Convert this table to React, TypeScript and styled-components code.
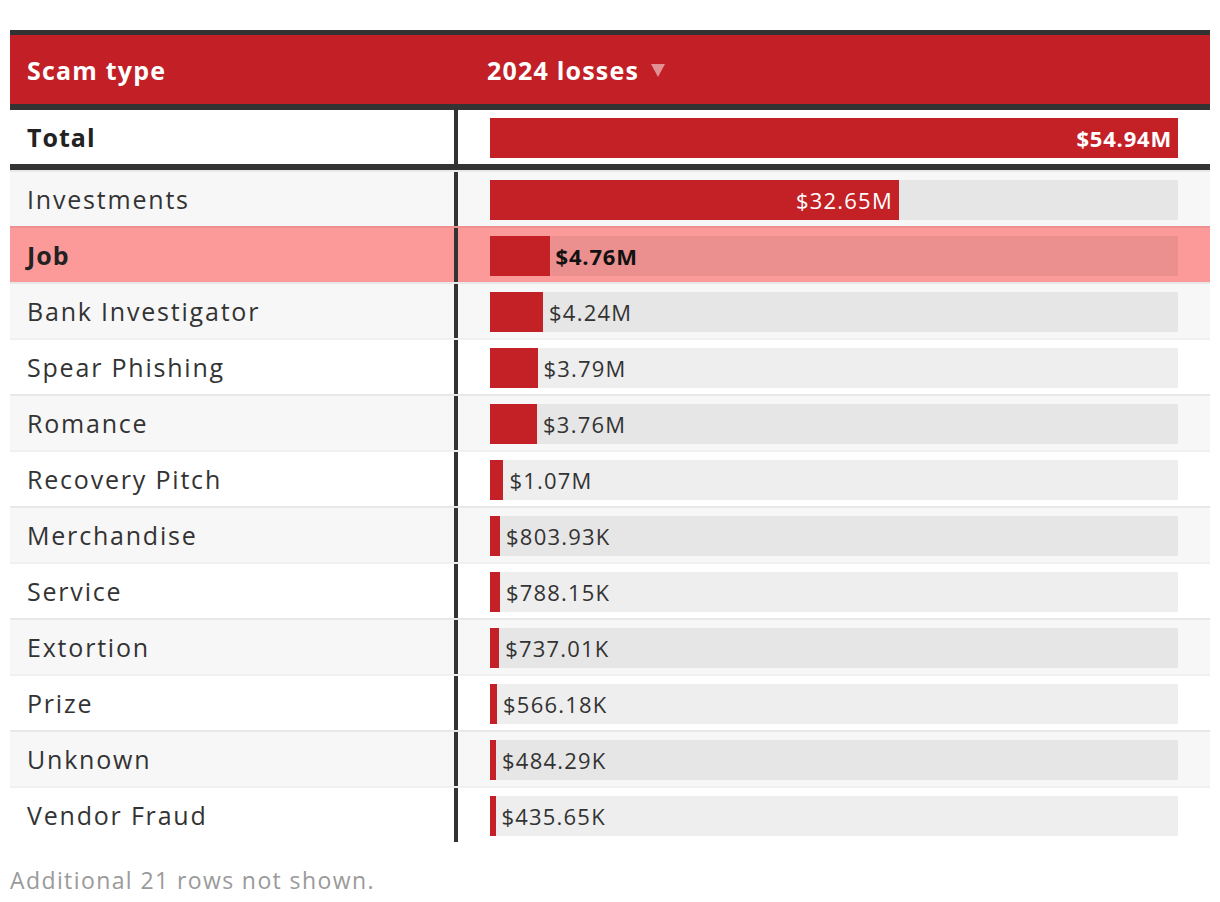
import React from "react";
import styled, { createGlobalStyle } from "styled-components";

type Row = { name: string; value: number; label: string; highlight?: boolean };

const MAX = 54.94;

const rows: Row[] = [
  { name: "Investments", value: 32.65, label: "$32.65M" },
  { name: "Job", value: 4.76, label: "$4.76M", highlight: true },
  { name: "Bank Investigator", value: 4.24, label: "$4.24M" },
  { name: "Spear Phishing", value: 3.79, label: "$3.79M" },
  { name: "Romance", value: 3.76, label: "$3.76M" },
  { name: "Recovery Pitch", value: 1.07, label: "$1.07M" },
  { name: "Merchandise", value: 0.80393, label: "$803.93K" },
  { name: "Service", value: 0.78815, label: "$788.15K" },
  { name: "Extortion", value: 0.73701, label: "$737.01K" },
  { name: "Prize", value: 0.56618, label: "$566.18K" },
  { name: "Unknown", value: 0.48429, label: "$484.29K" },
  { name: "Vendor Fraud", value: 0.43565, label: "$435.65K" },
];

const GlobalStyle = createGlobalStyle`
  body {
    margin: 0;
    background: #fff;
    font-family: "Open Sans", "Noto Sans", sans-serif;
    color: #333;
  }
`;

const Page = styled.div`
  padding: 30px 10px 0;
`;

const Table = styled.div`
  width: 1200px;
`;

const Header = styled.div`
  display: grid;
  grid-template-columns: 448px 1fr;
  height: 69px;
  align-items: center;
  background: #c22026;
  border-top: 5px solid #333;
  border-bottom: 6px solid #333;
  color: #fff;
  font-weight: 700;
  font-size: 25px;
  letter-spacing: 1.2px;
`;

const HeadCell = styled.div<{ $pad: number }>`
  display: flex;
  align-items: center;
  gap: 12px;
  padding-left: ${(p) => p.$pad}px;
`;

const TotalRow = styled.div`
  display: grid;
  grid-template-columns: 448px 1fr;
  height: 54px;
  border-bottom: 6px solid #333;
`;

const BodyRow = styled.div<{ $bg: string }>`
  display: grid;
  grid-template-columns: 448px 1fr;
  height: 54px;
  border-top: 2px solid rgba(0, 0, 0, 0.06);
  background: ${(p) => p.$bg};
`;

const NameCell = styled.div<{ $bold?: boolean }>`
  display: flex;
  align-items: center;
  padding-left: 17px;
  border-right: 4px solid #333;
  font-size: 25px;
  letter-spacing: ${(p) => (p.$bold ? "1px" : "1.8px")};
  font-weight: ${(p) => (p.$bold ? 700 : 400)};
  color: ${(p) => (p.$bold ? "#222" : "#333")};
`;

const BarCell = styled.div`
  padding: 8px 32px 6px;
`;

const Track = styled.div<{ $shade: boolean }>`
  display: flex;
  align-items: center;
  height: 40px;
  background: ${(p) => (p.$shade ? "rgba(0, 0, 0, 0.068)" : "transparent")};
`;

const Fill = styled.div`
  flex: none;
  display: flex;
  align-items: center;
  justify-content: flex-end;
  height: 100%;
  background: #c42127;
`;

const Value = styled.span<{ $inside: boolean; $bold?: boolean }>`
  font-size: 22px;
  letter-spacing: ${(p) => (p.$bold ? "0.8px" : "1.2px")};
  white-space: nowrap;
  padding: ${(p) => (p.$inside ? "0 6px 0 0" : "0 0 0 6px")};
  color: ${(p) => (p.$inside ? "#fff" : p.$bold ? "#111" : "#333")};
  font-weight: ${(p) => (p.$bold ? 700 : 400)};
`;

const Note = styled.div`
  margin-top: 22px;
  font-size: 23px;
  letter-spacing: 1.4px;
  color: #9a9a9a;
`;

const Arrow = () => (
  <svg width="14" height="14" viewBox="0 0 14 14">
    <polygon points="0,1 14,1 7,14" fill="rgba(255,255,255,0.5)" />
  </svg>
);

const Bar = ({ value, label, bold, full }: { value: number; label: string; bold?: boolean; full?: boolean }) => {
  const width = Math.round((value / MAX) * 688 * 10) / 10;
  const inside = width > 120;
  return (
    <Track $shade={!full}>
      <Fill style={{ width }}>
        {inside && (
          <Value $inside $bold={bold}>
            {label}
          </Value>
        )}
      </Fill>
      {!inside && (
        <Value $inside={false} $bold={bold}>
          {label}
        </Value>
      )}
    </Track>
  );
};

export default function App() {
  return (
    <Page>
      <GlobalStyle />
      <Table>
        <Header>
          <HeadCell $pad={17}>Scam type</HeadCell>
          <HeadCell $pad={29}>
            2024 losses <Arrow />
          </HeadCell>
        </Header>
        <TotalRow>
          <NameCell $bold>Total</NameCell>
          <BarCell>
            <Bar value={MAX} label="$54.94M" bold full />
          </BarCell>
        </TotalRow>
        {rows.map((r, i) => (
          <BodyRow key={r.name} $bg={r.highlight ? "#fc9a9a" : i % 2 === 0 ? "#f7f7f7" : "#fff"}>
            <NameCell $bold={r.highlight}>{r.name}</NameCell>
            <BarCell>
              <Bar value={r.value} label={r.label} bold={r.highlight} />
            </BarCell>
          </BodyRow>
        ))}
      </Table>
      <Note>Additional 21 rows not shown.</Note>
    </Page>
  );
}
